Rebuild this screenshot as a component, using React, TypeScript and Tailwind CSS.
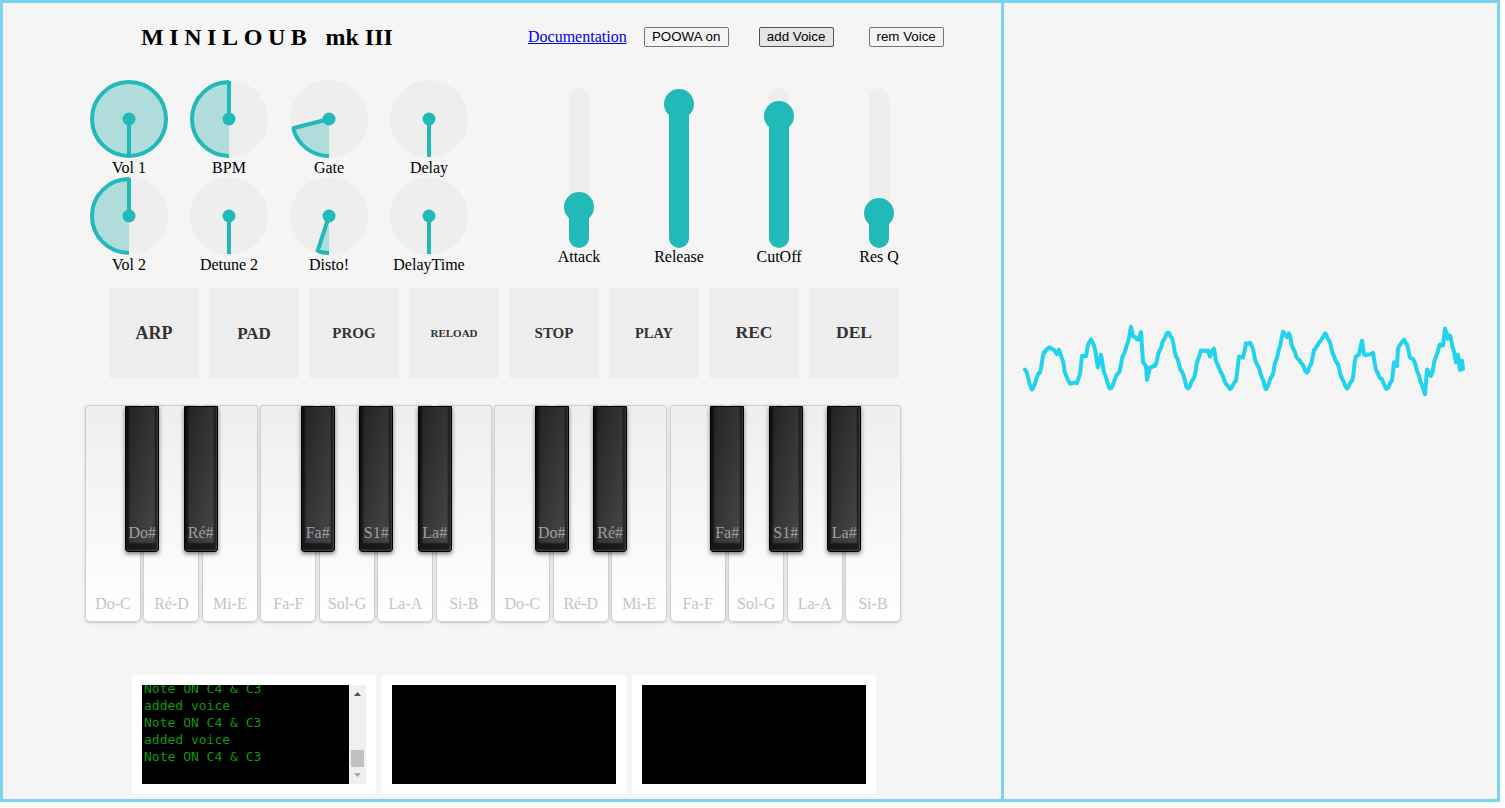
import React from "react";

const TEAL = "#22b9b9";

function Knob({ v, label }: { v: number; label: string }) {
  const cx = 40, cy = 40, r = 37;
  const th = v * 2 * Math.PI;
  const ex = cx - r * Math.sin(th);
  const ey = cy + r * Math.cos(th);
  const px = cx - 38 * Math.sin(th);
  const py = cy + 38 * Math.cos(th);
  let sector: React.ReactNode = null;
  if (v >= 0.999) {
    sector = <circle cx={cx} cy={cy} r={r} fill="#b0dcdc" stroke={TEAL} strokeWidth={4} />;
  } else if (v > 0) {
    const large = v > 0.5 ? 1 : 0;
    sector = (
      <>
        <path d={`M${cx} ${cy} L${cx} ${cy + r} A${r} ${r} 0 ${large} 1 ${ex} ${ey} Z`} fill="#b0dcdc" />
        <path d={`M${cx} ${cy + r} A${r} ${r} 0 ${large} 1 ${ex} ${ey}`} fill="none" stroke={TEAL} strokeWidth={4} />
      </>
    );
  }
  return (
    <div className="w-[100px] flex flex-col items-center">
      <svg width="80" height="80" viewBox="0 0 80 80" className="block">
        <circle cx={cx} cy={cy} r={39} fill="#eeeeee" />
        {sector}
        <line x1={cx} y1={cy} x2={px} y2={py} stroke={TEAL} strokeWidth={4} />
        <circle cx={cx} cy={cy} r={6.5} fill={TEAL} />
      </svg>
      <div className="h-[17px] leading-[17px] text-[16px] text-black whitespace-nowrap">{label}</div>
    </div>
  );
}

function Slider({ v, label }: { v: number; label: string }) {
  const H = 160, T = 30;
  const c = T / 2 + (1 - v) * (H - T);
  return (
    <div className="w-[100px] flex flex-col items-center">
      <div className="relative mt-[9px] w-[20px] h-[160px] rounded-full bg-[#eeeeee]">
        <div className="absolute bottom-0 left-0 w-full rounded-full bg-[#22b9b9]" style={{ height: H - c }} />
        <div className="absolute left-[-5px] w-[30px] h-[30px] rounded-full bg-[#22b9b9]" style={{ top: c - T / 2 }} />
      </div>
      <div className="h-[18px] leading-[18px] text-[16px] text-black whitespace-nowrap">{label}</div>
    </div>
  );
}

const PADS: { t: string; cls: string }[] = [
  { t: "ARP", cls: "text-[18px]" },
  { t: "PAD", cls: "text-[17px]" },
  { t: "PROG", cls: "text-[15px]" },
  { t: "RELOAD", cls: "text-[11px]" },
  { t: "STOP", cls: "text-[15px]" },
  { t: "PLAY", cls: "text-[14.5px]" },
  { t: "REC", cls: "text-[17.5px]" },
  { t: "DEL", cls: "text-[17.5px]" },
];

const WHITE = ["Do-C", "Ré-D", "Mi-E", "Fa-F", "Sol-G", "La-A", "Si-B"];
const BLACK: { i: number; t: string }[] = [
  { i: 0, t: "Do#" },
  { i: 1, t: "Ré#" },
  { i: 3, t: "Fa#" },
  { i: 4, t: "S1#" },
  { i: 5, t: "La#" },
];
const PITCH = 58.5;

const KP: [number, number][] = [
  [1025, 369], [1032, 389], [1040, 372], [1044, 352], [1048, 348], [1053, 349], [1057, 354], [1059, 350], [1062, 358], [1066, 376], [1070, 383], [1077, 383], [1080, 374], [1082, 356], [1086, 356], [1088, 344], [1091, 340], [1094, 346], [1098, 367], [1101, 355], [1104, 373], [1110, 389],
  [1118, 374], [1124, 354], [1128, 342], [1131, 327], [1133, 336], [1138, 340], [1141, 332], [1143, 362], [1146, 366], [1147, 380], [1150, 367], [1155, 366], [1160, 350], [1164, 339], [1168, 332], [1172, 338], [1176, 356], [1182, 372], [1188, 389],
  [1194, 378], [1198, 360], [1201, 351], [1208, 351], [1210, 356], [1214, 348], [1216, 362], [1221, 372], [1226, 384], [1230, 389], [1236, 381], [1239, 357], [1243, 357], [1246, 344], [1250, 343], [1253, 349], [1256, 363], [1259, 368], [1262, 378], [1266, 389],
  [1272, 376], [1276, 360], [1280, 346], [1283, 332], [1287, 337], [1289, 333], [1293, 349], [1298, 359], [1302, 364], [1307, 373], [1311, 364], [1314, 350], [1318, 344], [1322, 339], [1325, 333], [1329, 340], [1333, 354], [1337, 363], [1342, 378], [1347, 389],
  [1352, 381], [1356, 356], [1359, 354], [1362, 340], [1364, 355], [1370, 355], [1373, 353], [1376, 370], [1380, 378], [1387, 389], [1392, 380], [1394, 362], [1397, 366], [1398, 348], [1401, 343], [1404, 340], [1407, 344], [1410, 357], [1414, 360], [1418, 373], [1422, 385], [1425, 394], [1427, 370], [1431, 376], [1436, 357], [1440, 344], [1443, 346], [1445, 328], [1448, 338], [1450, 336], [1454, 352], [1456, 363], [1458, 355], [1460, 370], [1462, 360], [1463, 369],
];

function wavePath(): string {
  let seed = 9876;
  const rnd = () => {
    seed = (seed * 1103515245 + 12345) & 0x7fffffff;
    return seed / 0x7fffffff;
  };
  const pts: string[] = [];
  for (let k = 0; k < KP.length - 1; k++) {
    const [x0, y0] = KP[k];
    const [x1, y1] = KP[k + 1];
    const n = Math.max(1, Math.round((x1 - x0) / 1.5));
    for (let i = 0; i < n; i++) {
      const t = i / n;
      const x = x0 + (x1 - x0) * t;
      const y = y0 + ((y1 - y0) * (1 - Math.cos(Math.PI * t))) / 2 + (rnd() - 0.5) * 1.4;
      pts.push(`${x.toFixed(1)} ${y.toFixed(1)}`);
    }
  }
  const last = KP[KP.length - 1];
  pts.push(`${last[0]} ${last[1]}`);
  return "M" + pts.join(" L");
}

const LOG = ["Note ON C4 & C3", "added voice", "Note ON C4 & C3", "added voice", "Note ON C4 & C3"];

export default function App() {
  const d = wavePath();
  return (
    <div className="w-[1505px] h-[808px] bg-white flex items-start font-['Liberation_Serif','Times_New_Roman',serif]">
      {/* LEFT PANEL */}
      <div className="w-[1004px] h-[802px] border-[3px] border-[#78d6f0] bg-[#f5f5f5] flex flex-col shrink-0">
        {/* header */}
        <div className="mt-[24px] ml-[76px] h-[20px] flex items-center">
          <div className="w-[449px] pl-[62px] flex items-center text-[24px] font-bold text-black whitespace-nowrap leading-none">
            <span className="tracking-[5.6px]">MINILOUB</span>
            <span className="ml-[13px]">mk III</span>
          </div>
          <a href="#" className="text-[16px] text-[#0000ee] underline leading-none whitespace-nowrap">
            Documentation
          </a>
          <button className="ml-[17px] w-[85px] h-[20px] border border-[#767676] rounded-[2px] bg-[#f5f5f5] text-[13.33px] text-black font-['Liberation_Sans',Arial,sans-serif] leading-none">
            POOWA on
          </button>
          <button className="ml-[30px] w-[75px] h-[20px] border border-[#505050] rounded-[2px] bg-[#e6e6e6] text-[13.33px] text-black font-['Liberation_Sans',Arial,sans-serif] leading-none">
            add Voice
          </button>
          <button className="ml-[35px] w-[75px] h-[20px] border border-[#767676] rounded-[2px] bg-[#f5f5f5] text-[13.33px] text-black font-['Liberation_Sans',Arial,sans-serif] leading-none">
            rem Voice
          </button>
        </div>

        {/* controls */}
        <div className="mt-[32px] ml-[76px] flex items-start">
          <div className="w-[400px] grid grid-cols-4">
            <Knob v={1} label="Vol 1" />
            <Knob v={0.5} label="BPM" />
            <Knob v={0.21} label="Gate" />
            <Knob v={0} label="Delay" />
            <Knob v={0.5} label="Vol 2" />
            <Knob v={0} label="Detune 2" />
            <Knob v={0.05} label="Disto!" />
            <Knob v={0} label="DelayTime" />
          </div>
          <div className="ml-[50px] flex">
            <Slider v={0.2} label="Attack" />
            <Slider v={0.99} label="Release" />
            <Slider v={0.9} label="CutOff" />
            <Slider v={0.154} label="Res Q" />
          </div>
        </div>

        {/* pads */}
        <div className="mt-[15px] ml-[106px] flex gap-[10px]">
          {PADS.map((p) => (
            <div key={p.t} className="w-[90px] h-[90px] bg-[#eeeeee] flex items-center justify-center">
              <span className={`${p.cls} font-bold text-[#333333] leading-none`}>{p.t}</span>
            </div>
          ))}
        </div>

        {/* keyboard */}
        <div className="mt-[27px] ml-[82px] relative flex gap-[2.5px] w-[816px]">
          {[0, 1].flatMap((o) =>
            WHITE.map((w) => (
              <div
                key={`${o}-${w}`}
                className="relative w-[56px] h-[217px] border border-[#cfcfcf] rounded-t-[3px] rounded-b-[5px] bg-linear-to-b from-[#eeeeee] to-white shadow-[0_1px_3px_rgba(0,0,0,0.18)]"
              >
                <div className="absolute bottom-[8px] left-0 w-full text-center text-[16px] leading-[18px] text-[#c4c4c4]">{w}</div>
              </div>
            ))
          )}
          {[0, 1].flatMap((o) =>
            BLACK.map((b) => {
              const center = (o * 7 + b.i + 1) * PITCH - 1.3;
              return (
                <div
                  key={`${o}-${b.t}`}
                  className="absolute top-[1px] w-[34px] h-[146px] rounded-b-[3px] border border-black bg-linear-to-br from-[#222222] to-[#4a4a4a] shadow-[inset_-1px_-1px_2px_rgba(255,255,255,0.2),inset_0_-5px_2px_3px_rgba(0,0,0,0.6),0_2px_4px_rgba(0,0,0,0.5)]"
                  style={{ left: center - 17 }}
                >
                  <div className="absolute bottom-[9px] left-0 w-full text-center text-[16px] leading-[18px] text-[#9aa0a6]">{b.t}</div>
                </div>
              );
            })
          )}
        </div>

        {/* bottom boxes */}
        <div className="mt-[53px] ml-[129px] flex gap-[6px]">
          <div className="w-[244px] h-[119px] bg-white p-[10px]">
            <div className="w-[224px] h-[99px] bg-black flex">
              <div className="flex-1 overflow-hidden pl-[2px]">
                <div className="mt-[-5.5px] font-['DejaVu_Sans_Mono',monospace] text-[13px] leading-[17px] text-[#0d9a0d] whitespace-pre">
                  {LOG.map((l, i) => (
                    <div key={i}>{l}</div>
                  ))}
                </div>
              </div>
              <div className="w-[17px] h-full bg-[#f0f0f0] relative">
                <svg width="17" height="99" viewBox="0 0 17 99" className="block">
                  <path d="M5 11 L8.5 7 L12 11 Z" fill="#505050" />
                  <rect x="2" y="65" width="13" height="17" fill="#c1c1c1" />
                  <path d="M5 88 L12 88 L8.5 92 Z" fill="#a3a3a3" />
                </svg>
              </div>
            </div>
          </div>
          <div className="w-[244px] h-[119px] bg-white p-[10px]">
            <div className="w-[224px] h-[99px] bg-black" />
          </div>
          <div className="w-[244px] h-[119px] bg-white p-[10px]">
            <div className="w-[224px] h-[99px] bg-black" />
          </div>
        </div>
      </div>

      {/* RIGHT PANEL */}
      <div className="w-[496px] h-[802px] border-t-[3px] border-r-[3px] border-b-[3px] border-[#78d6f0] bg-[#f5f5f5] shrink-0">
        <svg viewBox="1004 3 493 796" width="493" height="796" className="block">
          <path d={d} fill="none" stroke="#22d3ee" strokeWidth={4} strokeLinejoin="round" strokeLinecap="round" />
        </svg>
      </div>
    </div>
  );
}
